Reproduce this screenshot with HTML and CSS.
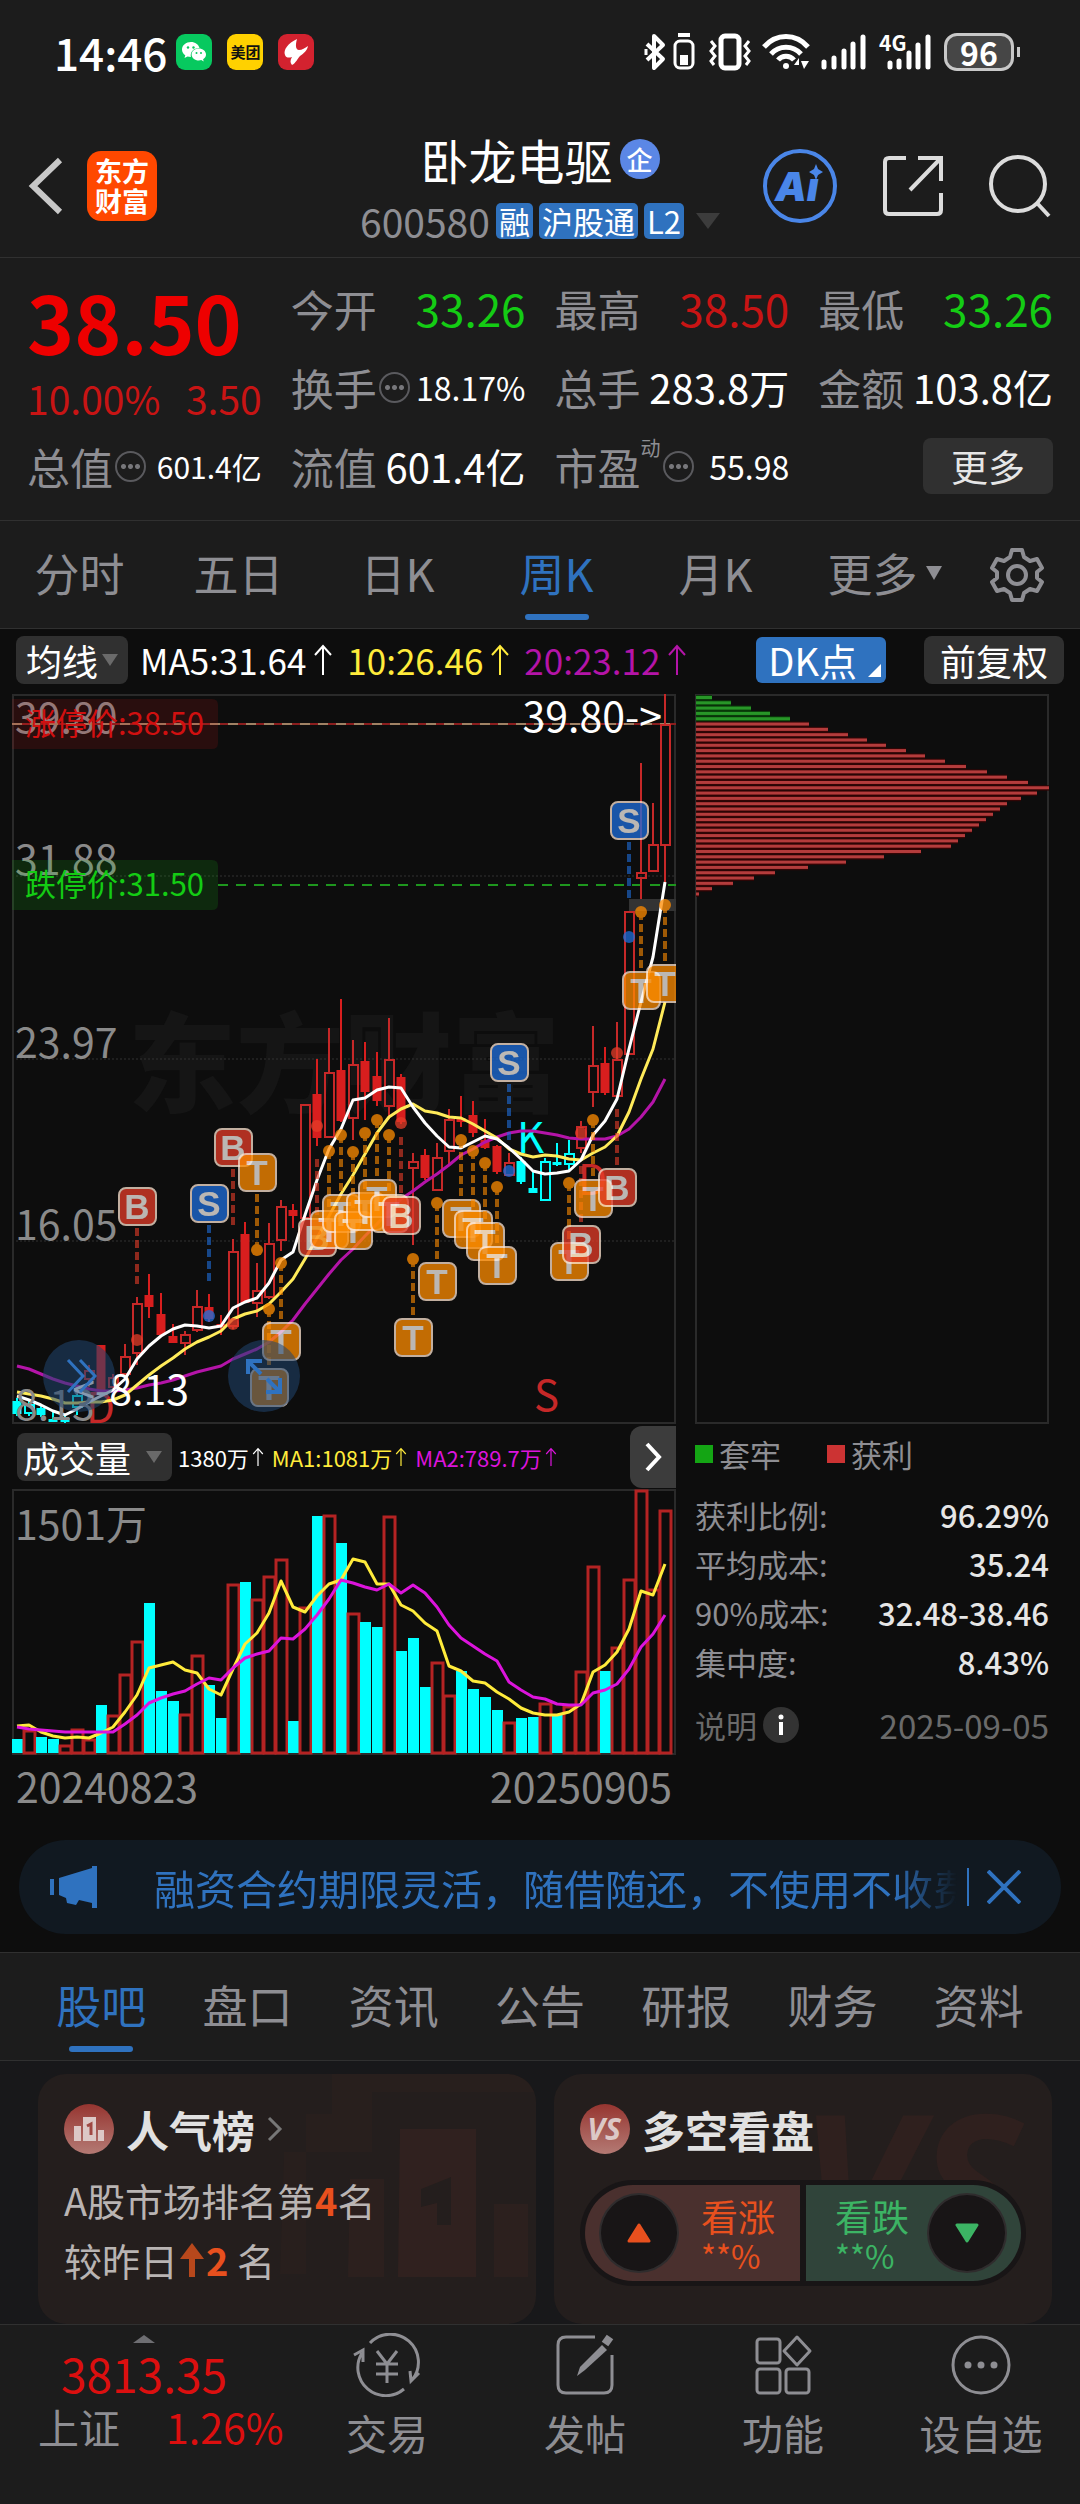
FILE: index.html
```html
<!DOCTYPE html>
<html lang="zh-CN">

<head>
    <meta charset="UTF-8">
    <meta name="viewport" content="width=device-width, initial-scale=1.0">
    <title>卧龙电驱 600580</title>
    <link rel="stylesheet" href="styles.css">
</head>

<body>
    <div class="status-bar">
        <span class="clock">14:46</span>
        <div class="app-icons">
            <svg viewBox="0 0 36 36" width="36" height="36">
                <rect width="36" height="36" rx="9" fill="#07c95f"/>
                <path d="M15 8c-5 0-9 3.300-9 7.500 0 2.400 1.300 4.400 3.300 5.800l-.8 2.600 3-1.500c1 .3 2.200.5 3.400.5-1-5 2.500-9 8.600-9C22.500 10.500 19.200 8 15 8z" fill="#fff"/>
                <path d="M30 20.500c0-3.400-3.300-6-7.200-6s-7.200 2.600-7.200 6 3.300 6 7.200 6c.9 0 1.700-.1 2.500-.4l2.400 1.300-.6-2.200c1.800-1.100 2.900-2.800 2.900-4.700z" fill="#fff"/>
                <g fill="#07c95f"><circle cx="12" cy="13.500" r="1.200"/><circle cx="17.500" cy="13.500" r="1.200"/><circle cx="20.500" cy="19" r="1"/><circle cx="25" cy="19" r="1"/></g>
            </svg>
            <span class="app-meituan">美团</span>
            <svg viewBox="0 0 36 36" width="36" height="36">
                <rect width="36" height="36" rx="9" fill="#d3222f"/>
                <path d="M19 5C10 9 5 16 7 21c1 3 4 3 7 2-2 3-2 6 0 8 4-2 5-6 8-9 4-3 7-5 8-10-3 2-6 4-9 4-3 0-4-4-2-11z" fill="#fff"/>
            </svg>
        </div>
        <div class="phone-icons">
            <svg viewBox="0 0 54 40" width="54" height="40" fill="none" stroke="#fff" stroke-width="4">
                <path d="M3 12l16 15-9 9V4l9 9L3 28" stroke-linejoin="round"/>
                <path d="M2 17v6" stroke-width="3"/>
                <rect x="31" y="9" width="18" height="27" rx="5" stroke-width="3"/>
                <path d="M34 3h12" stroke-width="4"/>
                <path d="M36 28h8" stroke-width="10"/>
            </svg>
            <svg viewBox="0 0 44 40" width="44" height="40" fill="none" stroke="#fff" stroke-width="4">
                <rect x="13" y="4" width="18" height="32" rx="4" stroke-width="5"/>
                <path d="M3 9l4 5-4 5 4 5-4 5 3 4M41 9l-4 5 4 5-4 5 4 5-3 4" stroke-width="3"/>
            </svg>
            <svg viewBox="0 0 48 40" width="48" height="40" fill="none" stroke="#fff" stroke-width="5">
                <path d="M2 15c12-14 32-14 44 0M9 22c8-9 22-9 30 0M16 28c4-5 12-5 16 0"/>
                <circle cx="24" cy="34" r="3" fill="#fff" stroke="none"/>
                <path d="M32 33l5-7v7zM39 29h8l-5 8z" fill="#fff" stroke="none"/>
            </svg>
            <svg viewBox="0 0 48 40" width="48" height="40" stroke="#fff" stroke-width="5" stroke-linecap="round">
                <path d="M4 30v5M14 26v9M24 19v16M33 12v23M43 5v30"/>
            </svg>
            <svg class="net" viewBox="0 0 56 40" width="56" height="40" stroke="#fff" stroke-width="5" stroke-linecap="round">
                <path d="M12 31v4M21 29v6M31 21v14M40 13v22M50 5v30"/>
                <text x="1" y="19" class="net-text">4G</text>
            </svg>
            <span class="battery">96</span>
        </div>
    </div>

    <header class="header">
        <div class="header-left">
            <button type="button" class="icon-btn" aria-label="返回">
                <svg viewBox="0 0 36 58" width="36" height="58" fill="none" stroke="#c8c8c8" stroke-width="6"><path d="M32 3L5 29l27 26"/></svg>
            </button>
            <a href="#" class="logo">东方<br>财富</a>
        </div>
        <div class="header-center">
            <h1>卧龙电驱<span class="corp">企</span></h1>
            <div class="code-line">
                <span class="code">600580</span>
                <span class="tag">融</span>
                <span class="tag">沪股通</span>
                <span class="tag">L2</span>
                <svg viewBox="0 0 24 16" width="24" height="16"><path d="M0 0h24L12 16z" fill="#3c3c3c"/></svg>
            </div>
        </div>
        <div class="header-right">
            <button type="button" class="icon-btn" aria-label="Ai">
                <svg viewBox="0 0 76 76" width="76" height="76">
                    <circle cx="38" cy="38" r="35" fill="none" stroke="#4a86e8" stroke-width="4"/>
                    <text x="13" y="53" class="ai-text">Aı</text>
                    <path d="M54 16l2 5 5 3-5 3-2 5-2-5-5-3 5-3z" fill="#4a86e8"/>
                </svg>
            </button>
            <button type="button" class="icon-btn" aria-label="分享">
                <svg viewBox="0 0 62 62" width="62" height="62" fill="none" stroke="#dcdcdc" stroke-width="4">
                    <path d="M24 3H7q-4 0-4 4v48q0 4 4 4h48q4 0 4-4V38M59 26V3H36M59 3L28 35"/>
                </svg>
            </button>
            <button type="button" class="icon-btn" aria-label="搜索">
                <svg viewBox="0 0 64 64" width="64" height="64" fill="none" stroke="#dcdcdc" stroke-width="4">
                    <circle cx="30" cy="30" r="27"/><path d="M49 49l12 13"/>
                </svg>
            </button>
        </div>
    </header>

    <section class="quote">
        <div class="price-box">
            <div class="price">38.50</div>
            <div class="change"><span>10.00%</span><span>3.50</span></div>
        </div>
        <div class="item"><span class="name">今开</span><span class="val green">33.26</span></div>
        <div class="item"><span class="name">最高</span><span class="val red">38.50</span></div>
        <div class="item"><span class="name">最低</span><span class="val green">33.26</span></div>
        <div class="item"><span class="name">换手<i class="dots"></i></span><span class="val small">18.17%</span></div>
        <div class="item"><span class="name">总手</span><span class="val mid">283.8万</span></div>
        <div class="item"><span class="name">金额</span><span class="val mid">103.8亿</span></div>
        <div class="item"><span class="name">总值<i class="dots"></i></span><span class="val tiny">601.4亿</span></div>
        <div class="item"><span class="name">流值</span><span class="val mid">601.4亿</span></div>
        <div class="item"><span class="name">市盈<sup>动</sup><i class="dots"></i></span><span class="val small">55.98</span></div>
        <div class="item item-more"><button type="button" class="more-btn">更多</button></div>
    </section>

    <nav class="period-tabs">
        <a href="#">分时</a>
        <a href="#">五日</a>
        <a href="#">日K</a>
        <a href="#" class="active">周K</a>
        <a href="#">月K</a>
        <a href="#" class="more-tab">更多<svg viewBox="0 0 16 14" width="16" height="14"><path d="M0 0h16L8 14z" fill="#8e8e93"/></svg></a>
        <button type="button" class="icon-btn" aria-label="设置">
            <svg viewBox="0 0 56 56" width="56" height="56" fill="none" stroke="#8e8e93" stroke-width="4" stroke-linejoin="round">
                <path d="M23 3h10l2 7 6 4 7-2 5 9-5 4v6l5 4-5 9-7-2-6 4-2 7H23l-2-7-6-4-7 2-5-9 5-4v-6l-5-4 5-9 7 2 6-4z"/>
                <circle cx="28" cy="28" r="9"/>
            </svg>
        </button>
    </nav>

    <main class="chart-area">
        <div class="ma-bar">
            <button type="button" class="grey-btn">均线<svg viewBox="0 0 16 12" width="16" height="12"><path d="M0 0h16L8 12z" fill="#6a6a6a"/></svg></button>
            <div class="ma-values">
                <span>MA5:31.64<svg class="up" viewBox="0 0 20 32"><path d="M10 31V2M2 11l8-9 8 9"/></svg></span>
                <span class="yellow">10:26.46<svg class="up" viewBox="0 0 20 32"><path d="M10 31V2M2 11l8-9 8 9"/></svg></span>
                <span class="purple">20:23.12<svg class="up" viewBox="0 0 20 32"><path d="M10 31V2M2 11l8-9 8 9"/></svg></span>
            </div>
            <button type="button" class="dk-btn">DK点</button>
            <button type="button" class="grey-btn">前复权</button>
        </div>

        <div class="charts">
            <div class="chart-left">
                <div class="kline">
                    <svg id="kline" viewBox="12 692 664 730"></svg>
                    <button type="button" class="round-btn expand" aria-label="展开">
                        <svg viewBox="0 0 72 72" fill="none" stroke="#2f72bf" stroke-width="3"><path d="M25 20l15 16-15 16M37 20l15 16-15 16"/></svg>
                    </button>
                    <button type="button" class="round-btn zoom" aria-label="全屏">
                        <svg viewBox="0 0 72 72" fill="none" stroke="#2f72bf" stroke-width="4"><path d="M20 34V21h14M20 21l13 13M38 52h14V38M52 52L39 39"/></svg>
                    </button>
                </div>
                <div class="vol-bar">
                    <button type="button" class="grey-btn vol-btn">成交量<svg viewBox="0 0 16 12" width="16" height="12"><path d="M0 0h16L8 12z" fill="#6a6a6a"/></svg></button>
                    <div class="vol-values">
                        <span>1380万<svg class="up" viewBox="0 0 20 32"><path d="M10 31V2M2 11l8-9 8 9"/></svg></span>
                        <span class="yellow">MA1:1081万<svg class="up" viewBox="0 0 20 32"><path d="M10 31V2M2 11l8-9 8 9"/></svg></span>
                        <span class="magenta">MA2:789.7万<svg class="up" viewBox="0 0 20 32"><path d="M10 31V2M2 11l8-9 8 9"/></svg></span>
                    </div>
                    <button type="button" class="next-btn" aria-label="下一个">
                        <svg viewBox="0 0 18 30" width="18" height="30" fill="none" stroke="#fff" stroke-width="4"><path d="M3 2l12 13L3 28"/></svg>
                    </button>
                </div>
                <svg id="volume" viewBox="12 1487 664 266"></svg>
                <div class="dates"><span>20240823</span><span>20250905</span></div>
            </div>

            <div class="chart-right">
                <svg id="chips" viewBox="695 692 354 730"></svg>
                <div class="legend">
                    <span class="legend-item lost">套牢</span>
                    <span class="legend-item gain">获利</span>
                </div>
                <dl class="chip-stats">
                    <div><dt>获利比例:</dt><dd>96.29%</dd></div>
                    <div><dt>平均成本:</dt><dd>35.24</dd></div>
                    <div><dt>90%成本:</dt><dd>32.48-38.46</dd></div>
                    <div><dt>集中度:</dt><dd>8.43%</dd></div>
                </dl>
                <div class="note">
                    <span>说明</span>
                    <svg viewBox="0 0 36 36" width="36" height="36"><circle cx="18" cy="18" r="18" fill="#333"/><circle cx="18" cy="10" r="2.500" fill="#fff"/><path d="M18 15v13" stroke="#fff" stroke-width="4"/></svg>
                    <time>2025-09-05</time>
                </div>
            </div>
        </div>

        <div class="promo">
            <svg viewBox="0 0 48 42" width="48" height="42" fill="#2f72bf"><path d="M0 13h4v16H0zM9 12L42 2V0h5v42h-5v-5l-13-3-3 5-9-2-1-5-7-3z"/></svg>
            <a href="#">融资合约期限灵活，随借随还，不使用不收费</a>
            <button type="button" class="icon-btn" aria-label="关闭">
                <svg viewBox="0 0 34 34" width="34" height="34" stroke="#2f72bf" stroke-width="4"><path d="M1 1l32 32M33 1L1 33"/></svg>
            </button>
        </div>
    </main>

    <nav class="info-tabs">
        <a href="#" class="active">股吧</a>
        <a href="#">盘口</a>
        <a href="#">资讯</a>
        <a href="#">公告</a>
        <a href="#">研报</a>
        <a href="#">财务</a>
        <a href="#">资料</a>
    </nav>

    <section class="cards">
        <article class="card">
            <svg class="card-bg" viewBox="0 0 260 250" fill="#ff5a46">
                <path d="M8 78h22v122H4zM56 0h204v18H96v60H30V40h26z" opacity=".02"/>
                <path d="M74 105h34v98H72zM218 130h34v73h-34z" opacity=".04"/>
                <path d="M124 55h76v148h-78zM145 115l30-12v48h-14v-22l-16 4z" fill-rule="evenodd" opacity=".06"/>
            </svg>
            <h2>
                <svg viewBox="0 0 50 50" width="50" height="50">
                    <circle cx="25" cy="25" r="25" fill="url(#badgeRed)"/>
                    <path d="M10 22h7v15h-7zM19 13h13v24H19zM34 26h6v11h-6z" fill="#dcc8c6"/>
                    <path d="M23 22l4-2v11" fill="none" stroke="#a04843" stroke-width="3"/>
                </svg>
                人气榜
                <svg viewBox="0 0 16 26" width="16" height="26" fill="none" stroke="#777" stroke-width="3"><path d="M2 2l11 11L2 24"/></svg>
            </h2>
            <p>A股市场排名第<b>4</b>名</p>
            <p>较昨日<svg class="rank-up" viewBox="0 0 24 34" width="24" height="34"><path d="M12 0l12 16h-9v18H9V16H0z" fill="#b8481c"/></svg><b>2</b> 名</p>
        </article>
        <article class="card">
            <svg class="card-bg" viewBox="0 0 260 250">
                <text x="6" y="184" class="vs-bg">VS</text>
            </svg>
            <h2>
                <svg viewBox="0 0 50 50" width="50" height="50">
                    <circle cx="25" cy="25" r="25" fill="url(#badgeRed)"/>
                    <text x="24" y="36" class="vs-text">VS</text>
                </svg>
                多空看盘
            </h2>
            <div class="vote">
                <button type="button" class="vote-up">
                    <span class="vote-dot"><svg viewBox="0 0 24 20" width="24" height="20"><path d="M12 2l10 16H2z" fill="#e8501e" stroke="#e8501e" stroke-width="3" stroke-linejoin="round"/></svg></span>
                    <span>看涨<small>**%</small></span>
                </button>
                <button type="button" class="vote-down">
                    <span>看跌<small>**%</small></span>
                    <span class="vote-dot"><svg viewBox="0 0 24 20" width="24" height="20"><path d="M12 18L2 2h20z" fill="#3cb464" stroke="#3cb464" stroke-width="3" stroke-linejoin="round"/></svg></span>
                </button>
            </div>
        </article>
        <svg class="defs" width="0" height="0">
            <defs><linearGradient id="badgeRed" x1="0" y1="0" x2="0" y2="1"><stop offset="0" stop-color="#963530"/><stop offset="1" stop-color="#b47a74"/></linearGradient></defs>
        </svg>
    </section>

    <nav class="bottom-nav">
        <a href="#" class="index-cell">
            <svg viewBox="0 0 22 8" width="22" height="8"><path d="M11 0l11 8H0z" fill="#6e6e72"/></svg>
            <span class="index-value">3813.35</span>
            <span class="index-line">上证<em>1.26%</em></span>
        </a>
        <a href="#">
            <svg viewBox="0 0 68 64" width="68" height="64" fill="none" stroke="#8e8e93" stroke-width="3">
                <path d="M17 10a28 28 0 0 1 42 37M66 40l-8 8-1-10M51 56A28 28 0 0 1 9 20M1 22l9-5v12"/>
                <path d="M24 18l10 13 10-13M23 31h22M23 41h22M34 31v19"/>
            </svg>
            交易
        </a>
        <a href="#">
            <svg viewBox="0 0 64 64" width="64" height="64" fill="none" stroke="#8e8e93" stroke-width="3">
                <path d="M42 4H13q-8 0-8 8v40q0 8 8 8h38q8 0 8-8V22"/>
                <path d="M52 11l5-7" stroke-width="8"/>
                <path d="M24 43l3-9 22-22 5 5-22 20z" fill="#8e8e93" stroke="none"/>
            </svg>
            发帖
        </a>
        <a href="#">
            <svg viewBox="0 0 64 64" width="64" height="64" fill="none" stroke="#8e8e93" stroke-width="3">
                <rect x="6" y="6" width="23" height="24" rx="3"/><rect x="6" y="36" width="23" height="24" rx="3"/><rect x="35" y="36" width="23" height="24" rx="3"/>
                <path d="M46 4l13 14-13 14-13-14z" stroke-linejoin="round"/>
            </svg>
            功能
        </a>
        <a href="#">
            <svg viewBox="0 0 64 64" width="64" height="64">
                <circle cx="32" cy="32" r="28" fill="none" stroke="#8e8e93" stroke-width="3"/>
                <g fill="#8e8e93"><circle cx="19" cy="32" r="3.500"/><circle cx="32" cy="32" r="3.500"/><circle cx="45" cy="32" r="3.500"/></g>
            </svg>
            设自选
        </a>
    </nav>

    <script src="chart.js"></script>
</body>

</html>
```

FILE: styles.css
```css
:root {
    --bg: #1c1c1c;
    --chart-bg: #0d0d0d;
    --line: #303030;
    --grey: #8e8e93;
    --blue: #2f72bf;
    --red: #c81414;
    --green: #14cc14;
    --yellow: #ffeb3b;
    --purple: #b414a8;
    --magenta: #dc14dc;
}

* {
    margin: 0;
    padding: 0;
    box-sizing: border-box;
}

body {
    background: var(--bg);
    color: white;
    font-family: "Noto Sans CJK SC", sans-serif;
}

a {
    color: inherit;
    text-decoration: none;
}

button {
    border: none;
    background: none;
    color: inherit;
    font-family: inherit;
    cursor: pointer;
}

svg {
    display: block;
    flex-shrink: 0;
}

.icon-btn {
    display: flex;
    align-items: center;
    justify-content: center;
}

.red {
    color: var(--red);
}

.green {
    color: var(--green);
}

.yellow {
    color: var(--yellow);
}

.purple {
    color: var(--purple);
}

.magenta {
    color: var(--magenta);
}

/* status bar */
.status-bar {
    display: flex;
    align-items: center;
    padding: 32px 66px 0 54px;
}

.clock {
    font-size: 44px;
    line-height: 40px;
    font-weight: 500;
}

.app-icons {
    display: flex;
    gap: 15px;
    margin-left: 9px;
}

.app-meituan {
    width: 36px;
    height: 36px;
    border-radius: 9px;
    background: #ffd100;
    color: #111;
    font-size: 15px;
    line-height: 36px;
    font-weight: bold;
    text-align: center;
}

.phone-icons {
    display: flex;
    align-items: center;
    gap: 10px;
    margin-left: auto;
}

.net {
    overflow: visible;
}

.net-text {
    font-size: 21px;
    font-weight: bold;
    fill: #fff;
    stroke: none;
}

.battery {
    position: relative;
    width: 70px;
    border: 3px solid #c8c8c8;
    border-radius: 13px;
    background: #464646;
    font-size: 32px;
    line-height: 32px;
    font-weight: bold;
    text-align: center;
}

.battery::after {
    content: '';
    position: absolute;
    right: -9px;
    top: 11px;
    width: 3px;
    height: 10px;
    background: #c8c8c8;
}

/* header */
.header {
    display: grid;
    grid-template-columns: 1fr auto 1fr;
    align-items: center;
    padding: 57px 28px 14px;
    border-bottom: 1px solid var(--line);
}

.header-left,
.header-right {
    display: flex;
    align-items: center;
}

.header-left {
    gap: 23px;
}

.header-right {
    justify-content: flex-end;
    gap: 44px;
}

.logo {
    width: 70px;
    padding: 5px 0;
    border-radius: 14px;
    background: #ff4800;
    font-size: 27px;
    line-height: 30px;
    font-weight: bold;
    text-align: center;
}

.header-center {
    display: flex;
    flex-direction: column;
    align-items: center;
    gap: 14px;
    padding-bottom: 4px;
}

h1 {
    display: flex;
    align-items: center;
    gap: 7px;
    font-size: 48px;
    line-height: 60px;
    font-weight: 400;
}

.corp {
    width: 40px;
    border-radius: 50%;
    background: #5b87e6;
    font-size: 26px;
    line-height: 40px;
    font-weight: 500;
    text-align: center;
}

.code-line {
    display: flex;
    align-items: center;
    gap: 6px;
}

.code {
    color: var(--grey);
    font-size: 39px;
    line-height: 36px;
}

.tag {
    padding: 0 3px;
    border-radius: 5px;
    background: var(--blue);
    font-size: 31px;
    line-height: 36px;
}

.code-line svg {
    margin-left: 6px;
}

.ai-text {
    font-family: "Inter", sans-serif;
    font-size: 40px;
    font-weight: 900;
    font-style: italic;
    fill: #4a86e8;
}

/* quote */
.quote {
    display: grid;
    grid-template-columns: repeat(4, 1fr);
    gap: 22px 29px;
    padding: 22px 27px 26px;
    border-bottom: 1px solid var(--line);
}

.price-box {
    grid-row: span 2;
    display: flex;
    flex-direction: column;
    gap: 20px;
}

.price {
    color: #ee0000;
    font-size: 80px;
    line-height: 80px;
    font-weight: bold;
}

.change {
    display: flex;
    justify-content: space-between;
    color: var(--red);
    font-size: 39px;
    line-height: 36px;
}

.item {
    display: flex;
    align-items: center;
    justify-content: space-between;
    height: 56px;
    white-space: nowrap;
}

.name {
    display: flex;
    align-items: center;
    color: var(--grey);
    font-size: 43px;
    line-height: 56px;
}

.name sup {
    align-self: flex-start;
    font-size: 20px;
    line-height: 20px;
}

.dots {
    width: 31px;
    height: 31px;
    margin-left: 2px;
    border: 2px solid #5a5a5e;
    border-radius: 50%;
    background: radial-gradient(circle at center, #77777b 2px, transparent 3px) center / 7px 7px repeat-x;
    background-clip: content-box;
    padding: 0 3px;
}

.val {
    font-size: 44px;
}

.val.mid {
    font-size: 40px;
}

.val.small {
    font-size: 32px;
}

.val.tiny {
    font-size: 30px;
}

.item-more {
    justify-content: flex-end;
}

.more-btn {
    padding: 0 28px;
    border-radius: 8px;
    background: #303030;
    color: #e6e6e6;
    font-size: 37px;
    line-height: 56px;
}

/* tabs */
.period-tabs {
    display: grid;
    grid-template-columns: repeat(6, 159fr) 126fr;
    border-bottom: 1px solid var(--line);
}

.info-tabs {
    display: grid;
    grid-template-columns: repeat(7, 1fr);
    padding: 0 28px;
    border-top: 1px solid var(--line);
    border-bottom: 1px solid var(--line);
}

.period-tabs a,
.info-tabs a {
    position: relative;
    padding: 22px 0 25px;
    color: var(--grey);
    font-size: 45px;
    line-height: 60px;
    text-align: center;
}

.period-tabs .active,
.info-tabs .active {
    color: var(--blue);
}

.active::after {
    content: '';
    position: absolute;
    left: 50%;
    bottom: 8px;
    width: 64px;
    height: 6px;
    margin-left: -32px;
    border-radius: 3px;
    background: var(--blue);
}

.period-tabs .more-tab {
    display: flex;
    align-items: center;
    justify-content: center;
    gap: 8px;
    padding-left: 20px;
}

/* chart area */
.chart-area {
    background: var(--chart-bg);
    padding-bottom: 18px;
}

.ma-bar {
    display: flex;
    align-items: center;
    padding: 7px 16px 10px;
}

.grey-btn {
    display: flex;
    align-items: center;
    gap: 4px;
    padding: 0 10px;
    border-radius: 8px;
    background: #303030;
    font-size: 36px;
    line-height: 48px;
    white-space: nowrap;
}

.grey-btn:last-child {
    padding: 0 16px;
    margin-left: 38px;
}

.ma-values {
    display: flex;
    gap: 14px;
    margin-left: 12px;
    font-size: 35px;
    line-height: 48px;
}

.ma-values span,
.vol-values span {
    display: flex;
    align-items: center;
}

.up {
    width: 20px;
    height: 32px;
    margin-left: 7px;
    fill: none;
    stroke: currentColor;
    stroke-width: 2;
}

.dk-btn {
    position: relative;
    margin-left: auto;
    padding: 0 29px 0 12px;
    border-radius: 6px;
    background: var(--blue);
    font-size: 38px;
    line-height: 46px;
}

.dk-btn::after {
    content: '';
    position: absolute;
    right: 5px;
    bottom: 6px;
    border-left: 13px solid transparent;
    border-bottom: 13px solid #fff;
}

.charts {
    display: grid;
    grid-template-columns: 664fr 354fr;
    gap: 19px;
    padding: 0 31px 0 12px;
}

.charts > div > svg,
.kline > svg {
    width: 100%;
}

.kline {
    position: relative;
}

.round-btn {
    position: absolute;
    bottom: 12px;
    width: 72px;
    height: 72px;
    border-radius: 50%;
    background: rgba(32, 70, 112, 0.55);
}

.round-btn.expand {
    left: 31px;
}

.round-btn.zoom {
    left: 216px;
}

.chart-frame {
    fill: none;
    stroke: #2a2a2a;
    stroke-width: 2;
}

.axis-text {
    font-size: 41px;
    fill: #8a8a8a;
}

.mark-text {
    font-size: 41px;
    fill: #fff;
}

.limit-text {
    font-size: 31px;
}

.letter {
    font-size: 42px;
}

.badge-text {
    font-family: "Liberation Sans", sans-serif;
    font-size: 35px;
    font-weight: bold;
    text-anchor: middle;
    fill: #f5f0eb;
}

.watermark {
    font-size: 108px;
    font-weight: 900;
    fill: #151515;
}

.vol-bar {
    display: flex;
    align-items: center;
    height: 65px;
    padding-left: 5px;
}

.vol-btn {
    gap: 15px;
    padding: 0 10px 0 6px;
}

.vol-values {
    display: flex;
    gap: 8px;
    margin-left: 6px;
    font-size: 22px;
    line-height: 48px;
}

.vol-values .up {
    width: 12px;
    height: 32px;
    margin-left: 3px;
}

.next-btn {
    display: flex;
    align-items: center;
    margin-left: auto;
    padding: 16px 14px;
    border-radius: 12px 0 0 12px;
    background: #3c3c3c;
}

.dates {
    display: flex;
    justify-content: space-between;
    margin-top: 10px;
    padding: 0 4px;
    color: #8a8a8a;
    font-size: 41px;
    line-height: 40px;
}

.legend {
    display: flex;
    gap: 46px;
    margin-top: 12px;
    color: var(--grey);
    font-size: 31px;
    line-height: 36px;
}

.legend-item {
    display: flex;
    align-items: center;
    gap: 6px;
}

.legend-item::before {
    content: '';
    width: 18px;
    height: 18px;
    background: #14a514;
}

.legend-item.gain::before {
    background: #cc3333;
}

.chip-stats {
    margin-top: 18px;
    font-size: 31px;
    line-height: 49px;
}

.chip-stats div {
    display: flex;
    justify-content: space-between;
    white-space: nowrap;
}

.chip-stats dt {
    color: var(--grey);
}

.chip-stats dd {
    color: #e6e6e6;
    font-weight: 500;
}

.note {
    display: flex;
    align-items: center;
    gap: 6px;
    margin-top: 19px;
    color: #6a6a6a;
    font-size: 31px;
    line-height: 40px;
}

.note time {
    margin-left: auto;
    font-size: 33px;
}

.promo {
    display: flex;
    align-items: center;
    margin: 35px 19px 0;
    padding: 0 40px 0 31px;
    border-radius: 47px;
    background: #111921;
    color: var(--blue);
}

.promo a {
    flex: 1;
    overflow: hidden;
    margin-left: 56px;
    font-size: 41px;
    line-height: 94px;
    white-space: nowrap;
    -webkit-mask-image: linear-gradient(to right, #000 92%, transparent);
    mask-image: linear-gradient(to right, #000 92%, transparent);
}

.promo button {
    margin-left: 10px;
    padding: 2px 0 2px 18px;
    border-left: 2px solid var(--blue);
}

/* cards */
.cards {
    display: grid;
    grid-template-columns: 1fr 1fr;
    gap: 18px;
    padding: 13px 28px 0 38px;
    background: #18181a;
}

.card {
    position: relative;
    height: 250px;
    padding: 30px 26px 0;
    border-radius: 28px;
    background: #241e1d;
    overflow: hidden;
}

.card-bg {
    position: absolute;
    right: 0;
    top: 0;
    width: 260px;
    height: 250px;
}

.card h2,
.card p,
.vote {
    position: relative;
}

.card h2 {
    display: flex;
    align-items: center;
    gap: 12px;
    margin-bottom: 16px;
    color: #e1e1e1;
    font-size: 43px;
    line-height: 50px;
    font-weight: bold;
}

.card p {
    display: flex;
    align-items: center;
    color: #b9b4b3;
    font-size: 38px;
    line-height: 60px;
    white-space: pre;
}

.card b {
    color: #e8501e;
}

.rank-up {
    margin: 0 2px;
}

.vs-text {
    font-family: "Open Sans", sans-serif;
    font-size: 30px;
    font-weight: bold;
    font-style: italic;
    text-anchor: middle;
    fill: #dcc8c6;
}

.vs-bg {
    font-family: "Open Sans", sans-serif;
    font-size: 200px;
    font-weight: bold;
    font-style: italic;
    fill: rgba(255, 80, 60, 0.05);
}

.vote {
    display: flex;
    gap: 6px;
    margin-top: 26px;
    padding: 5px;
    border-radius: 53px;
    background: #181516;
}

.vote button {
    display: flex;
    flex: 1;
    align-items: center;
    gap: 22px;
    height: 96px;
    font-size: 37px;
    line-height: 44px;
    text-align: left;
}

.vote small {
    display: block;
    font-size: 32px;
    line-height: 34px;
}

.vote-up {
    padding-left: 14px;
    border-radius: 48px 0 0 48px;
    background: #4a302e;
    color: #e8501e;
}

.vote .vote-down {
    justify-content: flex-end;
    gap: 18px;
    padding-right: 14px;
    border-radius: 0 48px 48px 0;
    background: #30443a;
    color: #3cb464;
}

.vote-dot {
    display: flex;
    align-items: center;
    justify-content: center;
    width: 80px;
    height: 80px;
    border: 2px solid rgba(255, 255, 255, 0.1);
    border-radius: 50%;
    background: #181516;
}

.defs {
    position: absolute;
}

/* bottom nav */
.bottom-nav {
    display: grid;
    grid-template-columns: minmax(0, 288fr) repeat(4, minmax(0, 198fr));
    padding-bottom: 46px;
    border-top: 1px solid var(--line);
    color: var(--grey);
}

.bottom-nav a {
    display: flex;
    flex-direction: column;
    align-items: center;
    gap: 9px;
    padding-top: 8px;
    font-size: 41px;
    line-height: 52px;
}

.bottom-nav .index-cell {
    gap: 4px;
    padding: 10px 38px 0;
}

.index-value {
    color: #dc0f0f;
    font-size: 46px;
    line-height: 52px;
}

.index-line {
    display: flex;
    align-self: flex-start;
    gap: 46px;
    line-height: 46px;
    white-space: nowrap;
}

.index-line em {
    color: #dc0f0f;
    font-style: normal;
}
```

FILE: chart.js
```js
const STEP = 12;
const FIRST = 17;
const RED = '#c62828';
const CYAN = '#00ffff';

const x = i => FIRST + i * STEP;

// kind: u = hollow red, d = solid red, c = solid cyan, h = hollow cyan
// [kind, high, low, body top, body bottom]
const candles = [
    ['c', 1396, 1414, 1399, 1412], ['h', 1398, 1414, 1402, 1412], ['c', 1404, 1415, 1406, 1413],
    ['c', 1410, 1419, 1417, 1420], ['c', 1412, 1421, 1416, 1420], ['h', 1388, 1413, 1393, 1406],
    ['u', 1363, 1385, 1368, 1378], ['d', 1343, 1388, 1343, 1388], ['u', 1372, 1390, 1375, 1386],
    ['u', 1342, 1376, 1354, 1373], ['u', 1295, 1363, 1301, 1352], ['d', 1272, 1316, 1293, 1305],
    ['d', 1291, 1334, 1312, 1333], ['d', 1322, 1341, 1334, 1341], ['u', 1329, 1353, 1332, 1342],
    ['u', 1288, 1330, 1304, 1329], ['d', 1292, 1320, 1305, 1317], ['d', 1313, 1333, 1322, 1325],
    ['u', 1237, 1327, 1249, 1325], ['d', 1220, 1301, 1232, 1301], ['u', 1261, 1315, 1288, 1302],
    ['u', 1221, 1297, 1241, 1296], ['u', 1198, 1249, 1204, 1239], ['d', 1202, 1226, 1208, 1214],
    ['u', 1102, 1217, 1102, 1217], ['d', 1057, 1144, 1092, 1136], ['u', 1026, 1136, 1070, 1136],
    ['d', 997, 1120, 1068, 1119], ['u', 1038, 1138, 1062, 1117], ['d', 1040, 1118, 1059, 1090],
    ['d', 1050, 1104, 1074, 1099], ['u', 1016, 1117, 1057, 1105], ['d', 1072, 1122, 1075, 1120],
    ['u', 1151, 1243, 1159, 1167], ['d', 1147, 1178, 1153, 1176], ['u', 1141, 1189, 1155, 1189],
    ['u', 1107, 1162, 1117, 1150], ['d', 1094, 1125, 1116, 1120], ['d', 1099, 1135, 1113, 1131],
    ['d', 1117, 1147, 1138, 1146], ['d', 1143, 1172, 1144, 1170], ['u', 1151, 1174, 1160, 1174],
    ['c', 1155, 1182, 1159, 1180], ['c', 1168, 1191, 1186, 1191], ['h', 1156, 1199, 1159, 1199],
    ['c', 1141, 1164, 1160, 1162], ['h', 1138, 1169, 1151, 1163], ['u', 1119, 1151, 1124, 1147],
    ['u', 1024, 1105, 1063, 1091], ['d', 1045, 1093, 1061, 1091], ['u', 1020, 1095, 1057, 1095],
    ['u', 909, 1053, 909, 1053], ['u', 761, 897, 870, 877], ['u', 801, 870, 842, 870],
    ['u', 692, 880, 722, 844]
];

const ma5 = [1394, 1398, 1403, 1409, 1413, 1407, 1400, 1394, 1388, 1377, 1357, 1344, 1334, 1327, 1323, 1324, 1326, 1324,
    1306, 1300, 1296, 1281, 1258, 1250, 1213, 1178, 1147, 1127, 1098, 1096, 1088, 1085, 1086, 1105, 1121, 1134,
    1145, 1146, 1140, 1134, 1137, 1146, 1157, 1169, 1172, 1171, 1169, 1158, 1133, 1119, 1097, 1047, 1000, 955, 880];
const ma10 = [1390, 1392, 1394, 1397, 1401, 1401, 1400, 1400, 1398, 1393, 1383, 1373, 1364, 1356, 1347, 1340, 1335, 1329,
    1317, 1312, 1309, 1302, 1290, 1277, 1257, 1236, 1214, 1192, 1173, 1152, 1131, 1115, 1107, 1102, 1109, 1111,
    1115, 1116, 1122, 1129, 1136, 1147, 1152, 1155, 1153, 1154, 1157, 1158, 1151, 1145, 1134, 1110, 1077, 1047, 1000];
const ma20 = [1364, 1367, 1372, 1377, 1381, 1384, 1387, 1389, 1389, 1388, 1386, 1383, 1381, 1378, 1374, 1370, 1367, 1364,
    1357, 1352, 1347, 1340, 1330, 1318, 1302, 1287, 1272, 1258, 1247, 1234, 1222, 1209, 1197, 1189, 1180, 1172,
    1163, 1153, 1147, 1140, 1135, 1131, 1129, 1129, 1131, 1133, 1136, 1137, 1137, 1137, 1134, 1127, 1115, 1100, 1077];

// [letter, candle, dot y, badge y]
const signals = [
    ['B', 10, 1338, 1204], ['S', 16, 1314, 1201], ['B', 18, 1322, 1145], ['T', 20, 1248, 1170],
    ['T', 21, 1307, 1385], ['T', 22, 1261, 1339], ['B', 25, 1124, 1235], ['T', 26, 1149, 1227],
    ['T', 27, 1133, 1211], ['T', 28, 1150, 1228], ['T', 29, 1131, 1209], ['T', 30, 1118, 1196],
    ['T', 31, 1133, 1211], ['B', 32, 1121, 1213], ['T', 33, 1257, 1335], ['T', 35, 1201, 1279],
    ['T', 37, 1138, 1216], ['T', 38, 1149, 1227], ['T', 39, 1161, 1239], ['T', 40, 1185, 1263],
    ['S', 41, 1169, 1060], ['T', 46, 1181, 1259], ['B', 47, 1131, 1242], ['T', 48, 1118, 1196],
    ['B', 50, 1051, 1185], ['S', 51, 935, 818], ['T', 52, 910, 988], ['T', 54, 903, 981]
];
const signalColors = { B: '#e63c28', S: '#1e6edc', T: '#ff8c00' };

// r = rising week, c = falling week
const volumes = 'c1737 r1728 c1735 c1737 r1743 r1727 r1737 c1703 r1713 r1672 r1639 c1601 c1689 c1699 r1712 r1653 c1683 c1716 r1582 c1580 r1597 r1574 r1557 c1719 r1605 c1514 r1513 c1541 r1611 c1620 c1625 r1514 c1649 c1636 c1685 r1660 r1693 c1669 c1687 c1695 c1708 r1720 c1716 c1715 r1701 c1713 r1704 r1669 r1564 c1669 r1645 r1577 r1488 r1587 r1508'.split(' ');
const volMa1 = [1724, 1723, 1730, 1734, 1736, 1735, 1736, 1731, 1725, 1710, 1693, 1666, 1663, 1660, 1668, 1671, 1687, 1693,
    1667, 1642, 1631, 1611, 1579, 1605, 1610, 1594, 1582, 1578, 1557, 1560, 1582, 1582, 1603, 1609, 1621, 1629,
    1664, 1669, 1679, 1681, 1690, 1697, 1706, 1711, 1713, 1713, 1710, 1702, 1670, 1663, 1650, 1627, 1589, 1593, 1562];
const volMa2 = [1725, 1727, 1728, 1729, 1730, 1730, 1730, 1730, 1730, 1722, 1713, 1701, 1696, 1692, 1689, 1682, 1676, 1678,
    1666, 1656, 1652, 1649, 1636, 1637, 1627, 1613, 1597, 1578, 1581, 1585, 1588, 1582, 1591, 1583, 1591, 1605,
    1623, 1636, 1644, 1652, 1659, 1680, 1688, 1695, 1697, 1702, 1703, 1703, 1691, 1688, 1682, 1667, 1645, 1632, 1613];

const chips = [16, 35, 55, 74, 94, 113, 132, 152, 171, 190, 210, 229, 249, 270, 291, 311, 332, 353, 341, 325,
    311, 304, 297, 290, 283, 276, 269, 262, 255, 225, 188, 150, 112, 79, 58, 37, 16, 3];

function line(values, color, width) {
    const points = values.map((v, i) => `${x(i)},${v}`).join(' ');
    return `<polyline points="${points}" fill="none" stroke="${color}" stroke-width="${width}" stroke-linejoin="round"/>`;
}

function candle([kind, high, low, top, bottom], i) {
    const color = kind === 'u' ? RED : kind === 'd' ? '#d81e1e' : CYAN;
    const solid = kind === 'd' || kind === 'c';
    const h = Math.max(bottom - top, 3);
    const body = solid
        ? `<rect x="${x(i) - 4.5}" y="${top}" width="9" height="${h}" fill="${color}"/>`
        : `<rect x="${x(i) - 4}" y="${top + 1}" width="9" height="${Math.max(h - 2, 2)}" fill="none" stroke="${color}" stroke-width="2"/>`;
    const wick = solid
        ? `M${x(i)} ${high}V${low}`
        : `M${x(i)} ${high}V${top}M${x(i)} ${bottom}V${low}`;
    return `<path d="${wick}" stroke="${color}" stroke-width="2"/>${body}`;
}

function signal([letter, i, dot, y]) {
    const color = signalColors[letter];
    const dir = dot > y ? 1 : -1;
    return `<g opacity=".75">
        <path d="M${x(i)} ${y + 78 * dir}V${y + 22 * dir}" stroke="${color}" stroke-width="4" stroke-dasharray="8 4" opacity=".8"/>
        <circle cx="${x(i)}" cy="${dot}" r="6" fill="${color}"/>
        <rect x="${x(i) - 18}" y="${y - 18}" width="37" height="37" rx="7" fill="${color}" stroke="#ffe6d2" stroke-width="2"/>
        <text x="${x(i)}" y="${y + 13}" class="badge-text">${letter}</text>
    </g>`;
}

function grid(y) {
    return `<path d="M12 ${y}H676" stroke="#333" stroke-dasharray="2 2"/>`;
}

document.getElementById('kline').innerHTML = `
    <text x="128" y="1102" class="watermark">东方财富</text>
    ${grid(874)}${grid(1057)}${grid(1239)}
    <rect x="13" y="693" width="662" height="728" class="chart-frame"/>
    <text x="15" y="731" class="axis-text">39.80</text>
    <text x="15" y="873" class="axis-text">31.88</text>
    <text x="15" y="1056" class="axis-text">23.97</text>
    <text x="15" y="1238" class="axis-text">16.05</text>
    <rect x="629" y="897" width="47" height="12" fill="#333"/>
    <path d="M12 722H676" stroke="#8c1e1e" stroke-width="2"/>
    <path d="M12 722H676" stroke="#a08264" stroke-width="2" stroke-dasharray="10 8"/>
    <path d="M218 883H676" stroke="#1e961e" stroke-width="2" stroke-dasharray="10 8"/>
    <path d="M12 697H212q6 0 6 6V741q0 6-6 6H12z" fill="#c81414" opacity=".15"/>
    <path d="M12 858H212q6 0 6 6V902q0 6-6 6H12z" fill="#14cc14" opacity=".15"/>
    <text x="25" y="733" class="limit-text" fill="#d01010">涨停价:38.50</text>
    <text x="25" y="894" class="limit-text" fill="#14cc14">跌停价:31.50</text>
    ${candles.map(candle).join('')}
    <text x="517" y="1151" class="letter" fill="${CYAN}">K</text>
    <text x="534" y="1409" class="letter" fill="${RED}">S</text>
    <text x="86" y="1421" class="letter" fill="${RED}">D</text>
    <text x="578" y="1193" class="letter" fill="${RED}">D</text>
    ${line(ma20, '#b414a8', 3)}${line(ma10, '#ffeb5a', 3)}${line(ma5, '#fff', 3)}
    ${signals.map(signal).join('')}
    <text x="15" y="1418" class="axis-text">8.13</text>
    <text x="189" y="1403" class="mark-text" text-anchor="end">&lt;-8.13</text>
    <text x="662" y="730" class="mark-text" text-anchor="end">39.80-&gt;</text>`;

document.getElementById('volume').innerHTML = `
    <rect x="13" y="1488" width="662" height="264" class="chart-frame"/>
    <text x="15" y="1538" class="axis-text">1501万</text>
    ${volumes.map((v, i) => {
        const y = Number(v.slice(1));
        return v[0] === 'c'
            ? `<rect x="${x(i) - 5}" y="${y}" width="11" height="${1751 - y}" fill="${CYAN}"/>`
            : `<rect x="${x(i) - 5}" y="${y + 1}" width="11" height="${1750 - y}" fill="none" stroke="#b42323" stroke-width="3"/>`;
    }).join('')}
    ${line(volMa1, '#ffeb3b', 3)}${line(volMa2, '#dc14dc', 3)}`;

document.getElementById('chips').innerHTML = `
    <rect x="696" y="693" width="352" height="728" class="chart-frame"/>
    ${chips.map((w, i) => {
        const y = 693 + i * 5.31;
        return `<rect x="696" y="${y}" width="${w}" height="5.31" fill="${i < 5 ? '#0a3c0a' : '#320505'}"/>
            <rect x="696" y="${y + 1}" width="${w}" height="3" fill="${i < 5 ? '#289628' : '#b43c3c'}"/>`;
    }).join('')}`;
```
